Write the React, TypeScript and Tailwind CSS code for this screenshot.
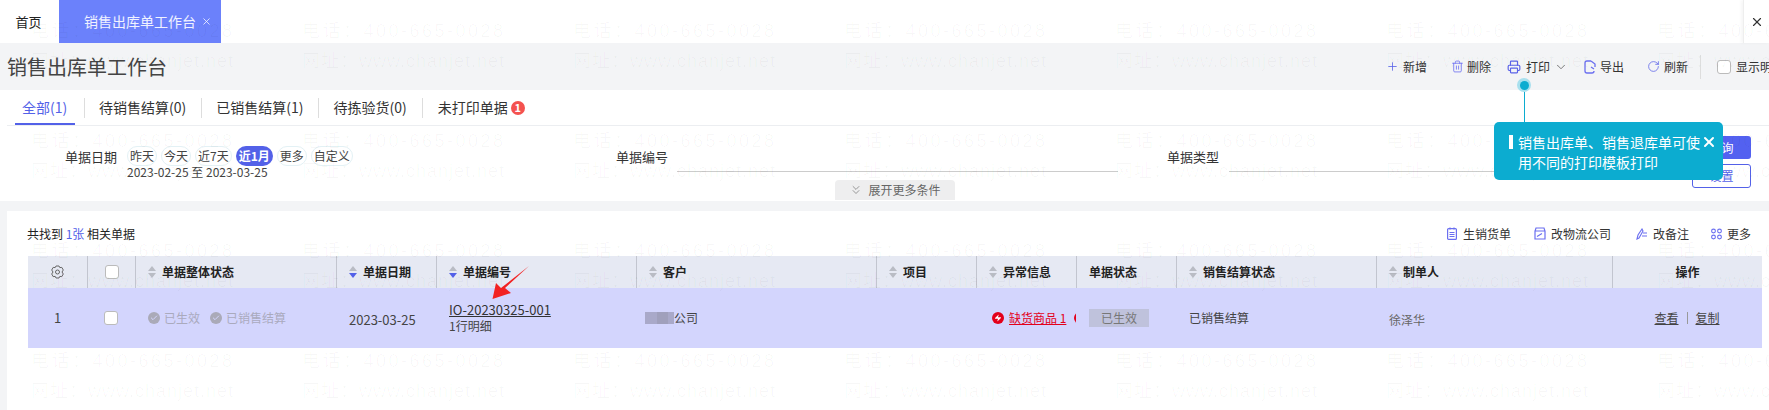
import { Plus, Printer, ChevronDown, RotateCw, X, ChevronsDown, Trash2, Check, Zap } from 'lucide-react';

const tabs = ['待销售结算(0)', '已销售结算(1)', '待拣验货(0)'];
const chips = ['昨天', '今天', '近7天', '近1月', '更多', '自定义'];

function Sort({ active }: { active?: boolean }) {
  return (
    <svg width="8" height="12" viewBox="0 0 8 12" className="shrink-0 mr-[6px]">
      <path d="M4 0 L8 5 H0 Z" fill="#b9bcc4" />
      <path d="M4 12 L8 7 H0 Z" fill={active ? '#5361e8' : '#b9bcc4'} />
    </svg>
  );
}

function ToolItem({ icon, label, className }: { icon: React.ReactNode; label: string; className: string }) {
  return (
    <div className={`flex items-center shrink-0 text-[12px] text-[#333] ${className}`}>
      {icon}
      <span>{label}</span>
    </div>
  );
}

function Watermark() {
  return (
    <div className="absolute inset-0 overflow-hidden pointer-events-none pl-[31px] pt-[16px] grid grid-cols-[repeat(7,271px)] auto-rows-[110px] text-[18px] leading-[30px] text-black/[0.03] font-['Liberation_Sans','Noto_Sans_CJK_SC',sans-serif]">
      {Array.from({ length: 28 }).map((_, i) => (
        <div key={i} className="whitespace-nowrap">
          <div className="tracking-[2.5px]">电话：400-665-0028</div>
          <div className="tracking-[1px]">网址：www.chanjet.net</div>
        </div>
      ))}
    </div>
  );
}

function HeaderCell({ label, sort, active }: { label: string; sort?: boolean; active?: boolean }) {
  return (
    <div className="flex items-center pl-3 font-bold text-[12px] text-[#222] border-l border-[#c2c5cf]">
      {sort && <Sort active={active} />}
      <span>{label}</span>
    </div>
  );
}

export default function App() {
  return (
    <div className="relative w-[1769px] h-[410px] overflow-hidden bg-white font-['Noto_Sans_CJK_SC','Noto_Sans',sans-serif] text-[#333]">
      {/* top tabs */}
      <div className="flex h-[43px]">
        <div className="w-[59px] pr-[2px] flex items-center justify-center text-[13px] text-[#222]">首页</div>
        <div className="w-[162px] flex items-center pl-[25px] bg-[#6b81fb] text-white text-[14px]">
          <span className="text-white/90">销售出库单工作台</span>
          <X size={11} className="ml-[5px] text-white/80" />
        </div>
        <div className="ml-auto w-[26px] flex items-center justify-center border-l border-[#eee] shadow-[-2px_0_3px_rgba(0,0,0,0.04)]">
          <X size={14} className="text-[#333]" />
        </div>
      </div>

      {/* title strip */}
      <div className="h-[47px] bg-[#f3f4f6] flex items-center">
        <div className="ml-[7px] w-[1379px] shrink-0 text-[20px] text-[#444] leading-none">销售出库单工作台</div>
        <ToolItem className="w-[65px]" label="新增" icon={<Plus size={13} strokeWidth={1.5} className="text-[#5a62e8] mr-[4px]" />} />
        <ToolItem className="w-[56px]" label="删除" icon={<Trash2 size={13} strokeWidth={1.5} className="text-[#6b6ff0] mr-[3px]" />} />
        <ToolItem className="w-[47px]" label="打印" icon={<Printer size={14} strokeWidth={2} className="text-[#5a62e8] mr-[5px]" />} />
        <ChevronDown size={14} strokeWidth={1.3} className="shrink-0 mr-[16px] text-[#555]" />
        <ToolItem className="w-[63px]" label="导出" icon={
          <svg width="12" height="14" viewBox="0 0 12 14" fill="none" stroke="#6b6ff0" strokeWidth="1.3" className="mr-[4px]">
            <path d="M7 1 H3 Q1 1 1 3 V11 Q1 13 3 13 H8 Q10 13 10 11 M7 1 L11 4 V7 M10 9 L7 7" />
          </svg>
        } />
        <ToolItem className="w-[53px]" label="刷新" icon={<RotateCw size={13} strokeWidth={1.4} className="text-[#5a62e8] mr-[4px]" />} />
        <div className="shrink-0 w-px h-[24px] bg-[#ddd] mr-[16px]" />
        <div className="shrink-0 w-[14px] h-[14px] rounded-[3px] border border-[#bbb] bg-white mr-[5px]" />
        <span className="shrink-0 text-[12px] whitespace-nowrap">显示明细</span>
      </div>

      {/* filter panel */}
      <div className="ml-[7px] h-[111px] bg-white">
        <div className="h-[36px] border-b border-[#eceef1] flex items-center text-[14px] text-[#333]">
          <div className="relative w-[77px] pl-[15px] h-full flex items-center text-[#5361e8]">
            全部(1)
            <div className="absolute left-[8px] right-[9px] bottom-0 h-[2px] bg-[#5361e8]" />
          </div>
          {tabs.map(t => (
            <div key={t} className="border-l border-[#ddd] h-[20px] flex items-center pl-[14px] pr-[15px] whitespace-nowrap">{t}</div>
          ))}
          <div className="border-l border-[#ddd] h-[20px] flex items-center pl-[15px]">
            未打印单据
            <span className="ml-[3px] w-[14px] h-[14px] rounded-full bg-[#f4524f] text-white text-[11px] font-bold flex items-center justify-center">1</span>
          </div>
        </div>
        <div className="flex h-[54px] pt-[10px] items-start">
          <div className="w-[609px] pl-[58px] flex items-start">
            <div className="w-[62px] mt-[11px] text-[13px] leading-[20px] text-[#333]">单据日期</div>
            <div className="mt-[10px]">
              <div className="flex gap-[4px] text-[12px]">
                {chips.map(c => (
                  <span key={c} className={`h-[20px] rounded-[10px] flex items-center ${c === '近1月' ? 'px-[3px] bg-[#5361e8] text-white font-bold' : 'px-[2px] border border-[#e3f1f5] text-[#444]'}`}>{c}</span>
                ))}
              </div>
              <div className="text-[12px] leading-[14px] text-[#444] -mt-[1px]">2023-02-25 至 2023-03-25</div>
            </div>
          </div>
          <div className="w-[551px] flex items-start">
            <div className="w-[61px] mt-[11px] text-[13px] leading-[20px]">单据编号</div>
            <div className="w-[441px] h-[36px] border-b border-[#ccc]" />
          </div>
          <div className="w-[500px] flex items-start">
            <div className="w-[62px] mt-[11px] text-[13px] leading-[20px]">单据类型</div>
            <div className="w-[420px] h-[36px] border-b border-[#ccc]" />
          </div>
          <div className="ml-auto mr-[18px] w-[59px] flex flex-col gap-[5px]">
            <div className="h-[23px] rounded-[3px] bg-[#5361f0] text-white text-[12px] flex items-center justify-center">查询</div>
            <div className="h-[24px] rounded-[3px] border border-[#5361e8] text-[#5361e8] text-[12px] flex items-center justify-center">设置</div>
          </div>
        </div>
        <div className="ml-[828px] w-[120px] h-[20px] rounded-t-[4px] bg-[#eeeeef] text-[12px] text-[#666] flex items-center justify-center gap-[5px]">
          <ChevronsDown size={14} strokeWidth={1.1} />
          展开更多条件
        </div>
      </div>

      {/* list panel */}
      <div className="bg-[#f3f4f6] pl-[7px] pt-[10px] h-[209px]">
        <div className="bg-white h-full">
          <div className="h-[45px] flex items-center text-[12px] pr-[18px]">
            <div className="ml-[20px] text-[#222]">共找到 <span className="text-[#5361e8]">1张</span> 相关单据</div>
            <ToolItem className="ml-auto" label="生销货单" icon={
              <svg width="10" height="13" viewBox="0 0 10 13" fill="none" stroke="#6b6ff0" strokeWidth="1.2" className="mr-[6px]">
                <rect x="0.6" y="1.6" width="8.8" height="10.8" rx="1" />
                <path d="M3 0.5 V2.5 M7 0.5 V2.5 M2.5 5.5 H7.5 M2.5 7.5 H7.5 M2.5 9.5 H7.5" />
              </svg>
            } />
            <ToolItem className="ml-[23px]" label="改物流公司" icon={
              <svg width="12" height="13" viewBox="0 0 12 13" fill="none" stroke="#6b6ff0" strokeWidth="1.2" className="mr-[5px]">
                <path d="M2 1 H10 L11 4 V12 H1 V4 Z M1 4 H11 M3 9.5 L8 6.5" />
              </svg>
            } />
            <ToolItem className="ml-[25px]" label="改备注" icon={
              <svg width="12" height="12" viewBox="0 0 12 12" fill="none" stroke="#6b6ff0" strokeWidth="1.1" className="mr-[5px]">
                <path d="M1 11 L2 7 L6 1 L7 3 L3 10 Z M7 5 H11 M6 8 H11" />
              </svg>
            } />
            <ToolItem className="ml-[22px]" label="更多" icon={
              <svg width="11" height="12" viewBox="0 0 11 12" fill="none" stroke="#6b6ff0" strokeWidth="1.1" className="mr-[5px]">
                <circle cx="2.5" cy="3" r="1.9" /><circle cx="8.5" cy="3" r="1.9" /><circle cx="2.5" cy="9" r="1.9" /><circle cx="8.5" cy="9" r="1.9" />
              </svg>
            } />
          </div>
          <div className="ml-[21px] w-[1734px]">
            <div className="grid grid-cols-[59px_48px_201px_100px_200px_240px_100px_100px_100px_200px_236px_150px] h-[32px] bg-[#e6e9f3]">
              <div className="flex items-center justify-center">
                <svg width="13" height="14" viewBox="0 0 13 14" fill="none" stroke="#666" strokeWidth="1">
                  <path d="M5 1 H8 L8.8 2.6 L10.8 2.4 L12.3 5 L11 7 L12.3 9 L10.8 11.6 L8.8 11.4 L8 13 H5 L4.2 11.4 L2.2 11.6 L0.7 9 L2 7 L0.7 5 L2.2 2.4 L4.2 2.6 Z" />
                  <circle cx="6.5" cy="7" r="2" />
                </svg>
              </div>
              <div className="border-l border-[#c2c5cf] flex items-center justify-center">
                <div className="w-[14px] h-[14px] rounded-[3px] border border-[#bbb] bg-white" />
              </div>
              <HeaderCell label="单据整体状态" sort />
              <HeaderCell label="单据日期" sort active />
              <HeaderCell label="单据编号" sort active />
              <HeaderCell label="客户" sort />
              <HeaderCell label="项目" sort />
              <HeaderCell label="异常信息" sort />
              <HeaderCell label="单据状态" />
              <HeaderCell label="销售结算状态" sort />
              <HeaderCell label="制单人" sort />
              <div className="border-l border-[#c2c5cf] flex items-center justify-center font-bold text-[12px] text-[#222]">操作</div>
            </div>
            <div className="grid grid-cols-[59px_48px_201px_100px_200px_240px_100px_100px_100px_200px_236px_150px] h-[60px] bg-[#d3d5fd] items-center text-[12px] text-[#444]">
              <div className="text-center text-[13px]">1</div>
              <div className="flex justify-center">
                <div className="w-[14px] h-[14px] rounded-[3px] border border-[#bbb] bg-white" />
              </div>
              <div className="flex items-center pl-[13px] text-[#aaaabd]">
                <span className="w-[12px] h-[12px] rounded-full bg-[#aaaab8] flex items-center justify-center mr-[4px]"><Check size={8} strokeWidth={3} className="text-[#d3d5fd]" /></span>
                已生效
                <span className="ml-[10px] w-[12px] h-[12px] rounded-full bg-[#aaaab8] flex items-center justify-center mr-[4px]"><Check size={8} strokeWidth={3} className="text-[#d3d5fd]" /></span>
                已销售结算
              </div>
              <div className="pl-[13px] text-[13px] pt-[3px]">2023-03-25</div>
              <div className="pl-[13px]">
                <div className="underline text-[13px] leading-[16px] text-[#333]">IO-20230325-001</div>
                <div className="leading-[16px]">1行明细</div>
              </div>
              <div className="flex items-center pl-[9px]">
                <span className="flex w-[29px] h-[12px] bg-[#a9a9c9]">
                  <span className="ml-[12px] w-[11px] bg-[#a0a0bc]" />
                </span>
                公司
              </div>
              <div />
              <div className="flex items-center pl-[16px] overflow-hidden whitespace-nowrap text-[#e3001b]">
                <span className="shrink-0 w-[12px] h-[12px] rounded-full bg-[#e3001b] flex items-center justify-center mr-[5px]"><Zap size={8} fill="white" strokeWidth={0} /></span>
                <span className="underline">缺货商品 1</span>
                <span className="shrink-0 ml-[8px] w-[12px] h-[12px] rounded-full bg-[#e3001b]" />
              </div>
              <div className="pl-[13px]">
                <div className="w-[60px] h-[18px] bg-[#bfc2dc] text-[#777] flex items-center justify-center">已生效</div>
              </div>
              <div className="pl-[13px]">已销售结算</div>
              <div className="pl-[13px] pt-[3px] text-[#666]">徐泽华</div>
              <div className="flex items-center justify-center gap-[8px]">
                <span className="underline">查看</span>
                <span className="w-px h-[12px] bg-[#999]" />
                <span className="underline">复制</span>
              </div>
            </div>
          </div>
        </div>
      </div>

      <Watermark />

      {/* annotation arrow */}
      <svg className="absolute left-[490px] top-[264px]" width="44" height="38" viewBox="0 0 44 38">
        <path d="M39 2 L15 24 L21 29 L2.5 35 L6 19 L11 24 Z" fill="#f22222" />
      </svg>

      {/* guide tooltip */}
      <div className="absolute left-[1517px] top-[78px] w-[14px] h-[14px] rounded-full bg-[#a8e0ee] flex items-center justify-center">
        <div className="w-[9px] h-[9px] rounded-full bg-[#0cacd0]" />
      </div>
      <div className="absolute left-[1524px] top-[92px] w-px h-[30px] bg-[#0cacd0]" />
      <div className="absolute left-[1494px] top-[122px] w-[229px] h-[58px] rounded-[5px] bg-[#0cacd0] text-white text-[14px] leading-[20px] pl-[24px] pr-[6px] pt-[10px]">
        <div className="absolute left-[15px] top-[13px] w-[4px] h-[14px] bg-white" />
        销售出库单、销售退库单可使
        <br />
        用不同的打印模板打印
        <X size={16} strokeWidth={3} className="absolute right-[6px] top-[12px]" />
      </div>
    </div>
  );
}
